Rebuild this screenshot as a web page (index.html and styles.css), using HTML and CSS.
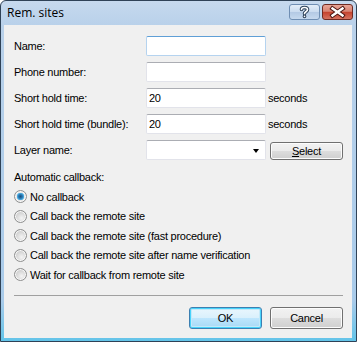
FILE: index.html
```html
<!DOCTYPE html>
<html lang="en">
<head>
  <meta charset="UTF-8">
  <title>Rem. sites</title>
  <link rel="stylesheet" href="styles.css">
</head>
<body>

<div class="window">
  <header class="titlebar">
    <span class="title">Rem. sites</span>
    <div class="caption-buttons">
      <button class="cap help">
        <svg width="29" height="14" viewBox="0 0 29 14">
          <g fill="none" stroke-linecap="round" stroke-linejoin="round">
            <path d="M11.5 4.5 C11.5 1.8 17.5 1.8 17.5 4.5 C17.5 6.6 14.5 6.8 14.5 8.6" stroke="#2c4058" stroke-width="3.6"/>
            <path d="M14.5 11.3 L14.5 11.4" stroke="#2c4058" stroke-width="3.6"/>
            <path d="M11.5 4.5 C11.5 1.8 17.5 1.8 17.5 4.5 C17.5 6.6 14.5 6.8 14.5 8.6" stroke="#fff" stroke-width="1.6"/>
            <path d="M14.5 11.3 L14.5 11.4" stroke="#fff" stroke-width="1.6"/>
          </g>
        </svg>
      </button>
      <button class="cap close">
        <svg width="29" height="14" viewBox="0 0 29 14">
          <g fill="none" stroke-linecap="square">
            <path d="M9.5 3.5 L19.5 10.5 M19.5 3.5 L9.5 10.5" stroke="#4a1410" stroke-width="4.4"/>
            <path d="M9.5 3.5 L19.5 10.5 M19.5 3.5 L9.5 10.5" stroke="#fff" stroke-width="2.4"/>
          </g>
        </svg>
      </button>
    </div>
  </header>

  <div class="client">
    <div class="form">
      <label>Name:</label>
      <input class="textbox focused" type="text">
      <span></span>

      <label>Phone number:</label>
      <input class="textbox" type="text">
      <span></span>

      <label>Short hold time:</label>
      <input class="textbox" type="text" value="20">
      <span class="unit">seconds</span>

      <label>Short hold time (bundle):</label>
      <input class="textbox" type="text" value="20">
      <span class="unit">seconds</span>

      <label>Layer name:</label>
      <div class="textbox combo"><span class="arrow"></span></div>
      <button class="btn select"><u>S</u>elect</button>
    </div>

    <div class="group-label">Automatic callback:</div>
    <ul class="radios">
      <li><span class="radio checked"></span>No callback</li>
      <li><span class="radio"></span>Call back the remote site</li>
      <li><span class="radio"></span>Call back the remote site (fast procedure)</li>
      <li><span class="radio"></span>Call back the remote site after name verification</li>
      <li><span class="radio"></span>Wait for callback from remote site</li>
    </ul>

    <hr class="sep">

    <div class="actions">
      <button class="btn default">OK</button>
      <button class="btn">Cancel</button>
    </div>
  </div>
</div>

</body>
</html>
```

FILE: styles.css
```css
html, body {
  margin: 0;
  padding: 0;
}

body {
  font-family: "Liberation Sans", Arial, sans-serif;
  font-size: 11px;
  letter-spacing: -0.25px;
  color: #000;
  background: #fff;
}

.window {
  width: 357px;
  height: 342px;
  box-sizing: border-box;
  border: 1px solid #2f4257;
  border-radius: 6px 6px 0 0;
  background: linear-gradient(#c6d9ee, #b9d1ea 24px, #a9cbea 300px, #62c4e9 100%);
  display: flex;
  flex-direction: column;
}

.titlebar {
  height: 24px;
  display: flex;
  justify-content: space-between;
  align-items: flex-start;
  padding: 0 3px 0 6px;
}

.title {
  font-family: "Open Sans", "Noto Sans", sans-serif;
  font-size: 12px;
  letter-spacing: 0;
  line-height: 24px;
  color: #000;
}

.caption-buttons {
  display: flex;
  gap: 2px;
  margin-top: 3px;
}

.cap {
  width: 31px;
  height: 16px;
  padding: 0;
  border-radius: 3px;
  display: flex;
  align-items: center;
  justify-content: center;
}

.help {
  border: 1px solid #6f8eb3;
  background: linear-gradient(#e3edf8, #c9dbef 50%, #b3c9e4 51%, #c6d9ee);
}

.close {
  border: 1px solid #6f2a22;
  background: linear-gradient(#e8a597, #d88373 45%, #c5432f 52%, #d57260);
}

.client {
  flex: 1;
  margin: 0 4px 3px 3px;
  background: #f0f0f0;
  padding: 11px 9px 0 10px;
}

.form {
  display: grid;
  grid-template-columns: 132px 120px auto;
  grid-auto-rows: 20px;
  row-gap: 6px;
  align-items: center;
}

.form label {
  line-height: 13px;
}

.textbox {
  box-sizing: border-box;
  height: 20px;
  width: 120px;
  margin: 0;
  padding: 0 2px;
  border: 1px solid #e2e3ea;
  border-top-color: #abadb3;
  border-radius: 2px;
  background: #fff;
  font: 11px "Liberation Sans", Arial, sans-serif;
  letter-spacing: -0.25px;
  color: #000;
  outline: none;
}

.textbox.focused {
  border-color: #b5d3ef;
  border-top-color: #5f9fd6;
}

.unit {
  margin-left: 2px;
}

.combo {
  position: relative;
}

.combo .arrow {
  position: absolute;
  right: 6px;
  top: 8px;
  border-left: 3.5px solid transparent;
  border-right: 3.5px solid transparent;
  border-top: 4px solid #000;
}

.btn {
  box-sizing: border-box;
  width: 73px;
  height: 22px;
  padding: 0;
  border: 1px solid #707070;
  border-radius: 3px;
  background: linear-gradient(#f2f2f2, #ebebeb 50%, #dddddd 51%, #cfcfcf);
  box-shadow: inset 0 0 0 1px #fcfcfc;
  font: 11px "Liberation Sans", Arial, sans-serif;
  letter-spacing: -0.25px;
  color: #000;
}

.btn.select {
  height: 18px;
  margin-left: 4px;
  align-self: start;
  margin-top: 2px;
}

.btn.default {
  border-color: #3c7fb1;
  background: linear-gradient(#eaf6fd, #d9f0fc 50%, #bee6fd 51%, #a7d9f5);
  box-shadow: inset 0 0 0 1px #48d3fb, inset 0 0 0 2px #c4e9f9;
}

.group-label {
  margin-top: 11px;
  line-height: 13px;
}

.radios {
  list-style: none;
  margin: 3px 0 0;
  padding: 0;
}

.radios li {
  height: 19.5px;
  display: flex;
  align-items: center;
  gap: 3px;
}

.radio {
  box-sizing: border-box;
  width: 13px;
  height: 13px;
  border-radius: 50%;
  border: 1px solid #8e8f8f;
  background: radial-gradient(circle at 60% 65%, #f4f4f4, #d5d5d5 55%, #c4c4c4);
  box-shadow: inset 0 0 0 1px #f8f8f8;
}

.radio.checked {
  background: radial-gradient(circle at 50% 50%, #1a4f7c 0, #2a79b3 2px, #57b6e8 3.5px, #e6e6e6 4px, #d5d5d5 100%);
}

.sep {
  margin: 10px 0 0;
  border: 0;
  border-top: 1px solid #a0a0a0;
  height: 0;
}

.actions {
  display: flex;
  justify-content: flex-end;
  gap: 8px;
  margin-top: 11px;
}
```
